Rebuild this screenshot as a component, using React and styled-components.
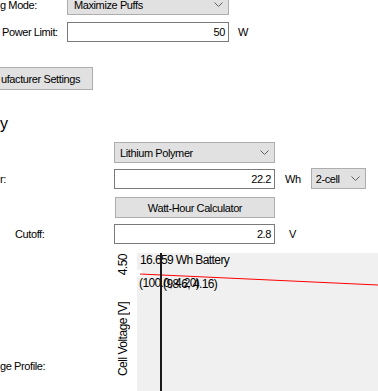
import React from 'react';
import styled, { createGlobalStyle } from 'styled-components';

const GlobalStyle = createGlobalStyle`
  html, body {
    margin: 0;
    padding: 0;
    background: #ffffff;
    overflow: hidden;
  }
  body {
    font-family: "Liberation Sans", Arial, sans-serif;
    font-size: 11px;
    letter-spacing: -0.4px;
    color: #000000;
  }
`;

const Window = styled.div`
  width: 378px;
  height: 391px;
  overflow: hidden;
  background: #ffffff;
`;

const Form = styled.div`
  display: flex;
  flex-direction: column;
`;

const Row = styled.div`
  display: flex;
  align-items: center;
  height: ${p => p.$h}px;
  margin-top: ${p => p.$mt || 0}px;
  flex-shrink: 0;
`;

const Label = styled.div`
  box-sizing: border-box;
  width: ${p => p.$w}px;
  padding-left: ${p => p.$indent || 0}px;
  white-space: nowrap;
  flex-shrink: 0;
`;

const Heading = styled.div`
  font-size: 16px;
  line-height: 19px;
  letter-spacing: -0.3px;
  height: 19px;
  margin-top: ${p => p.$mt}px;
`;

const ComboBox = styled.div`
  box-sizing: border-box;
  display: flex;
  align-items: center;
  justify-content: space-between;
  width: ${p => p.$w}px;
  height: 21px;
  margin-left: ${p => p.$ml || 0}px;
  padding: 0 5px 0 ${p => p.$pl || 5}px;
  background: #e1e1e1;
  border: 1px solid #adadad;
  white-space: nowrap;
  flex-shrink: 0;
`;

const TextBox = styled.div`
  box-sizing: border-box;
  display: flex;
  align-items: center;
  justify-content: flex-end;
  width: ${p => p.$w}px;
  height: 20px;
  padding-right: 3px;
  background: #ffffff;
  border: 1px solid #7a7a7a;
  flex-shrink: 0;
`;

const Unit = styled.span`
  margin-left: ${p => p.$ml}px;
  white-space: nowrap;
`;

const Button = styled.div`
  box-sizing: border-box;
  display: flex;
  align-items: center;
  justify-content: ${p => (p.$align === 'left' ? 'flex-start' : 'center')};
  width: ${p => p.$w}px;
  height: ${p => p.$h}px;
  margin-left: ${p => p.$ml || 0}px;
  padding-left: ${p => p.$pl || 0}px;
  background: #e1e1e1;
  border: 1px solid #adadad;
  white-space: nowrap;
  flex-shrink: 0;
`;

const ChartRow = styled.div`
  display: flex;
  height: 138px;
  margin-top: 9px;
`;

const ChartLabel = styled.div`
  box-sizing: border-box;
  width: 114px;
  padding-top: 107px;
  line-height: 13px;
  white-space: nowrap;
  flex-shrink: 0;
`;

const Axis = styled.div`
  display: flex;
  flex-direction: column;
  width: 23px;
  padding-top: 1px;
  flex-shrink: 0;
`;

const AxisText = styled.span`
  writing-mode: vertical-rl;
  transform: rotate(180deg);
  font-size: 12px;
  letter-spacing: -0.5px;
  line-height: 13px;
  margin-left: 3px;
  margin-top: ${p => p.$mt || 0}px;
  white-space: nowrap;
`;

const Plot = styled.div`
  position: relative;
  flex: 1;
  background: #f0f0f0;
  overflow: hidden;
  font-size: 12px;
  letter-spacing: -0.6px;
  line-height: 14px;
`;

const PlotText = styled.span`
  position: absolute;
  left: ${p => p.$x}px;
  top: ${p => p.$y}px;
  white-space: nowrap;
`;

const PlotLines = styled.svg`
  position: absolute;
  left: 0;
  top: 0;
  width: 241px;
  height: 138px;
`;

const Chevron = () => (
  <svg width="9" height="5" viewBox="0 0 9 5">
    <polyline points="0.5,0.5 4.5,4.5 8.5,0.5" fill="none" stroke="#606060" strokeWidth="1" />
  </svg>
);

const App = () => (
  <Window>
    <GlobalStyle />
    <Form>
      <Row $h={21} $mt={-6}>
        <Label $w={67}>g Mode:</Label>
        <ComboBox $w={162} $pl={6}>
          <span>Maximize Puffs</span>
          <Chevron />
        </ComboBox>
      </Row>
      <Row $h={20} $mt={7}>
        <Label $w={67} $indent={2}>Power Limit:</Label>
        <TextBox $w={162}>50</TextBox>
        <Unit $ml={9}>W</Unit>
      </Row>
      <Row $h={23} $mt={25}>
        <Button $w={95} $h={23} $ml={-2} $pl={2} $align="left">ufacturer Settings</Button>
      </Row>

      <Heading $mt={24}>y</Heading>

      <Row $h={21} $mt={9}>
        <Label $w={114} />
        <ComboBox $w={161}>
          <span>Lithium Polymer</span>
          <Chevron />
        </ComboBox>
      </Row>
      <Row $h={21} $mt={5}>
        <Label $w={114}>r:</Label>
        <TextBox $w={161}>22.2</TextBox>
        <Unit $ml={10}>Wh</Unit>
        <ComboBox $w={55} $ml={10} $pl={4}>
          <span>2-cell</span>
          <Chevron />
        </ComboBox>
      </Row>
      <Row $h={21} $mt={8}>
        <Button $w={160} $h={21} $ml={115}>Watt-Hour Calculator</Button>
      </Row>
      <Row $h={20} $mt={6}>
        <Label $w={114} $indent={15}>Cutoff:</Label>
        <TextBox $w={161}>2.8</TextBox>
        <Unit $ml={14}>V</Unit>
      </Row>

      <ChartRow>
        <ChartLabel>ge Profile:</ChartLabel>
        <Axis>
          <AxisText>4.50</AxisText>
          <AxisText $mt={27}>Cell Voltage [V]</AxisText>
        </Axis>
        <Plot>
          <PlotText $x={3} $y={0}>16.659 Wh Battery</PlotText>
          <PlotText $x={2} $y={23}>(100.0, 4.20)</PlotText>
          <PlotText $x={26} $y={24}>(98.6, 4.16)</PlotText>
          <PlotLines viewBox="0 0 241 138">
            <circle cx="2" cy="20" r="3.5" fill="#ffffff" />
            <line x1="3" y1="21" x2="241" y2="32" stroke="#ff0000" strokeWidth="1" />
            <rect x="23" y="0" width="2" height="138" fill="#1a1a1a" />
          </PlotLines>
        </Plot>
      </ChartRow>
    </Form>
  </Window>
);

export default App;
